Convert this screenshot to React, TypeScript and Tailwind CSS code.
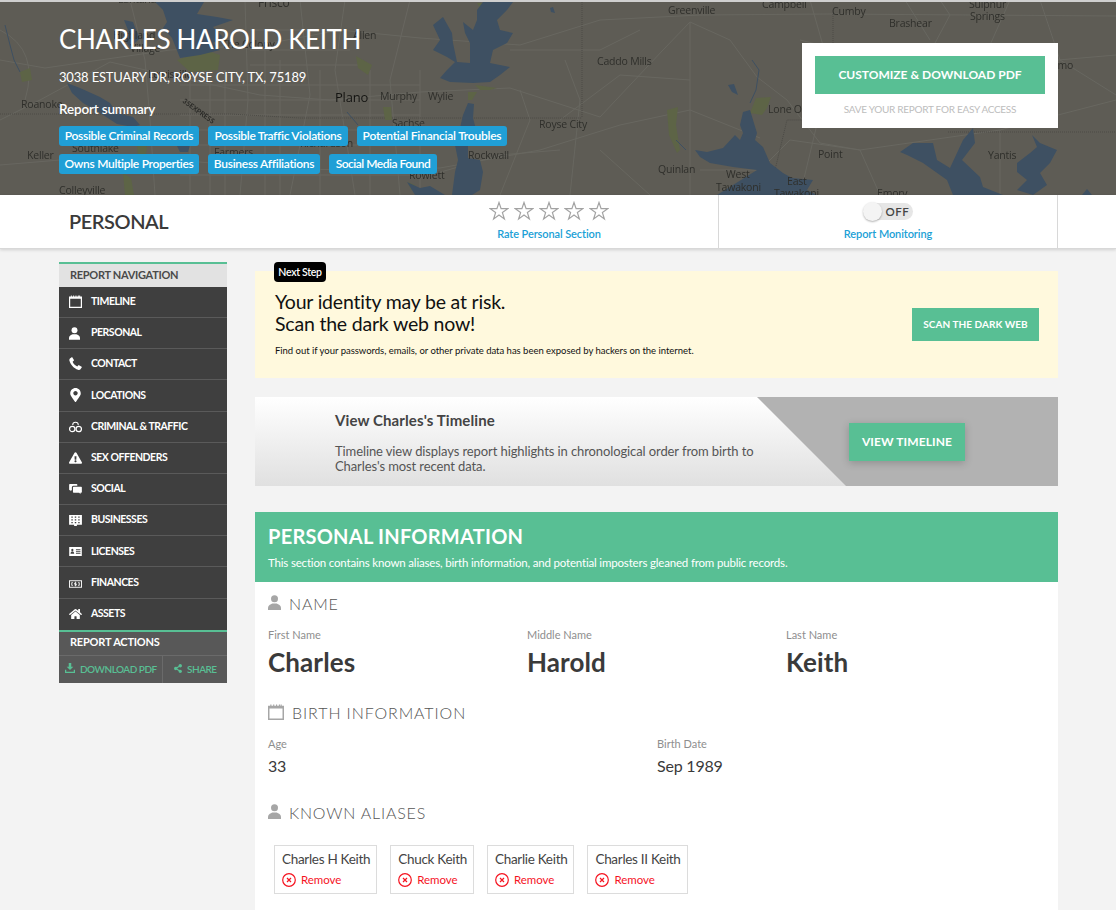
import React from "react";
import { FaMapMarkerAlt, FaExclamationTriangle, FaHome, FaShareAlt } from "react-icons/fa";

const labels: [string, number, number, number?][] = [
  ["Lantana", 118, 3], ["Frisco", 258, 7, 12], ["Greenville", 668, 14], ["Campbell", 762, 8], ["Cumby", 832, 15], ["Brashear", 889, 27],
  ["Sulphur", 969, 8], ["Springs", 970, 20], ["Caddo Mills", 597, 65], ["Lone Oak", 768, 113], ["Royse City", 539, 128],
  ["Murphy", 380, 100], ["Wylie", 428, 100], ["Sachse", 392, 127], ["Roanoke", 21, 108],
  ["Keller", 27, 159], ["Southlake", 72, 152], ["Farmers", 214, 156], ["Richardson", 300, 147], ["Rockwall", 468, 159], ["Rowlett", 409, 179],
  ["Colleyville", 59, 194], ["Quinlan", 658, 173], ["West", 726, 178], ["Tawakoni", 716, 191], ["East", 787, 185],
  ["Tawakoni", 774, 197], ["Point", 818, 158], ["Yantis", 988, 159], ["Emory", 877, 197], ["Allen", 353, 39],
  ["Highland", 113, 39], ["Village", 130, 52], ["The Colony", 222, 48], ["Lewisville", 148, 78], ["Como", 1045, 69],
];

const roads = [
  "M0 60 L45 68 L100 60 L170 50 L260 45 L340 30 L420 38 L520 45 L600 20 L700 15 L830 14 L1116 16",
  "M0 120 L40 100 L110 62 L190 80 L260 95 L330 100 L420 92 L510 88 L600 117",
  "M600 117 L663 50 L690 22 L730 40 L757 77 L787 100 L820 143 L860 150 L1000 130 L1116 100",
  "M0 165 L120 155 L290 170 L440 168 L540 150 L620 125 L690 110 L760 138",
  "M130 0 L145 60 L150 120 L155 195", "M245 0 L248 100 L240 195", "M300 0 L310 95 L290 195", "M345 0 L335 70 L355 195",
  "M410 0 L390 80 L400 195", "M520 90 L530 120 L500 195", "M690 22 L690 195", "M565 60 L580 100 L570 195",
  "M810 0 L830 70 L800 195", "M905 0 L930 40", "M1010 0 L990 45", "M1000 130 L1000 195",
  "M180 85 L420 85", "M180 100 L420 100", "M180 115 L420 115", "M180 130 L420 130", "M180 145 L420 145", "M180 175 L420 175",
  "M190 60 L190 195", "M210 70 L210 195", "M225 70 L225 195", "M265 30 L265 195", "M280 60 L280 195", "M320 70 L320 195", "M370 70 L370 195", "M420 70 L420 195",
  "M250 30 L340 30", "M250 50 L350 50", "M250 65 L360 65", "M560 120 L620 75 L690 80", "M420 178 L500 155 L560 150",
  "M0 30 Q40 50 25 100", "M1040 0 L1060 60 L1116 95", "M880 60 L800 40", "M600 150 L650 195", "M1058 60 L1116 55",
  "M700 170 L760 170 L790 140 L860 150 L880 195", "M940 0 L950 15 L935 43", "M510 50 L600 50 L640 30",
];

function MapBackground() {
  return (
    <svg className="absolute left-0 -top-[2px] w-[1116px] h-[195px] blur-[0.4px]" viewBox="0 0 1116 195" preserveAspectRatio="none">
      <rect width="1116" height="195" fill="#5e5c55" />
      <g stroke="#686760" strokeWidth="1" fill="none">
        {roads.map((d, i) => (<path key={i} d={d} />))}
      </g>
      <g stroke="#4c4b46" strokeWidth="1" strokeDasharray="1 1" fill="none">
        <path d="M0 114 L230 114 L300 118 L450 118 L582 118" />
        <path d="M582 0 L582 118" />
        <path d="M775 170 L787 120 L802 120" />
        <path d="M948 132 L1116 132" />
        <path d="M833 14 L833 43" />
      </g>
      <g fill="#5d6446">
        <path d="M20 72 L30 68 L32 80 L22 82 Z" />
        <path d="M177 60 L205 50 L220 55 L218 70 L190 72 Z" />
        <path d="M137 146 L147 145 L146 155 L138 155 Z" />
        <path d="M123 173 L131 178 L134 195 L125 195 Z" />
        <path d="M477 3 L490 3 L488 8 L480 8 Z" />
        <path d="M475 85 L497 88 L490 90 L480 90 Z" />
        <path d="M468 92 L477 92 L472 100 L468 100 Z" />
        <path d="M383 107 L391 107 L392 120 L385 120 Z" />
        <path d="M356 56 L372 65 L368 75 L358 68 Z" />
        <path d="M408 182 L415 185 L417 190 L411 190 Z" />
        <path d="M667 110 L678 107 L676 125 L680 150 L677 153 L669 135 Z" />
        <path d="M750 113 L756 98 L771 97 L767 108 L762 115 Z" />
      </g>
      <g fill="#3e5062">
        <path d="M155 2 L204 2 L197 14 L217 17 L233 20 L213 27 L223 37 L213 43 L220 50 L200 55 L180 58 L172 38 L163 28 L167 22 L163 10 Z" />
        <path d="M124 20 L133 22 L136 30 L140 38 L130 48 L124 38 L128 30 Z" />
        <path d="M67 83 L80 88 L100 97 L110 103 L117 113 L133 117 L140 125 L133 127 L117 124 L100 113 L83 103 L72 93 Z" />
        <path d="M177 146 L190 145 L188 152 L180 152 Z" />
        <path d="M443 17 L452 33 L453 43 L457 62 L470 63 L470 43 L465 33 L463 22 L473 30 L477 20 L477 10 L483 2 L513 2 L507 10 L497 20 L500 30 L513 33 L507 43 L493 50 L490 63 L510 67 L500 75 L490 82 L473 83 L450 82 L440 78 L447 70 L455 62 L447 57 L433 50 L440 40 L433 25 Z" />
        <path d="M468 103 L474 104 L473 118 L477 133 L468 143 L468 158 L480 160 L483 172 L480 190 L472 195 L452 195 L455 172 L458 160 L455 145 L460 128 L463 115 Z" />
        <path d="M407 182 L420 188 L430 186 L445 195 L415 195 Z" />
        <path d="M695 150 L707 152 L723 148 L735 135 L740 140 L743 133 L740 125 L743 112 L750 110 L757 133 L755 140 L763 147 L770 163 L783 173 L792 178 L813 180 L807 190 L817 195 L717 195 L757 170 L733 167 L710 163 L700 157 Z" />
        <path d="M728 85 L734 84 L738 95 L732 92 Z" />
        <path d="M900 152 L913 143 L933 143 L937 160 L950 168 L963 140 L973 128 L975 143 L962 160 L980 177 L983 187 L1003 195 L953 195 L947 180 L923 163 L907 155 Z" />
        <path d="M1017 163 L1030 153 L1037 147 L1032 135 L1040 143 L1057 150 L1050 163 L1040 173 L1047 185 L1033 195 L1017 190 L1027 180 L1017 172 Z" />
        <path d="M1082 195 L1087 189 L1092 195 Z" />
        <path d="M550 8 L553 7 L555 13 L551 12 Z" />
      </g>
      <g stroke="#3e5062" fill="none" strokeWidth="1">
        <path d="M752 60 L759 70 L756 90 L750 103" />
        <path d="M5 25 L10 45 L14 60 L20 72" />
        <path d="M676 140 L686 150" />
        <path d="M347 112 L358 125" />
      </g>
      <text x="182" y="102" fontSize="7" fill="#2a2a27" fontFamily="Lato, sans-serif" fontWeight="700" transform="rotate(36 182 102)">35EXPRESS</text>
      <g fontFamily="'Open Sans', Lato, sans-serif" fill="#2f2f2b" letterSpacing="-0.2">
        {labels.map(([t, x, y, s], i) => (
          <text key={i} x={x} y={y} fontSize={s ?? 10.5}>{t}</text>
        ))}
        <text x="335" y="102" fontSize="13" fill="#141412">Plano</text>
      </g>
    </svg>
  );
}

function CalendarIcon({ className = "" }: { className?: string }) {
  return (
    <svg viewBox="0 0 14 14" className={className} fill="currentColor">
      <path fillRule="evenodd" d="M0 1.500h2V0.500h1v1h1.500V.5h1v1H7V.5h1v1h1.500V.5h1v1H11V.5h1v1h2V14H0ZM1.300 4V12.700H12.700V4Z" />
    </svg>
  );
}
function Cuffs({ className = "" }: { className?: string }) {
  return (
    <svg viewBox="0 0 14 13" className={className} fill="none" stroke="currentColor" strokeWidth="1.300">
      <circle cx="3.500" cy="9.200" r="2.900" /><circle cx="10.500" cy="9.200" r="2.900" />
      <path d="M4 4.800A3 3 0 1 1 10 4.800" strokeWidth="1.100" />
    </svg>
  );
}
function GridIcon({ className = "" }: { className?: string }) {
  return (
    <svg viewBox="0 0 14 12" className={className} fill="currentColor">
      <path fillRule="evenodd" d="M0 0h14v10.500H8.500V12h-3v-1.500H0ZM2.500 1.500v1.500H4V1.500Zm3.700 0v1.500h1.600V1.500Zm3.800 0v1.500h1.500V1.500ZM2.500 4.500V6H4V4.500Zm3.700 0V6h1.600V4.500Zm3.800 0V6h1.500V4.500ZM2.500 7.500V9H4V7.500Zm3.700 0V9h1.600V7.500Zm3.800 0V9h1.500V7.500Z" />
    </svg>
  );
}
function LicenseIcon({ className = "" }: { className?: string }) {
  return (
    <svg viewBox="0 0 14 10" className={className} fill="currentColor">
      <path fillRule="evenodd" d="M0 0h14v10H0ZM3.500 2a1.300 1.300 0 1 0 .01 0ZM1.500 7.500h4c0-1.800-.8-2.400-2-2.400s-2 .6-2 2.400ZM7.500 2.500v1h5v-1Zm0 2.200v1h5v-1Zm0 2.200v1h5v-1Z" />
    </svg>
  );
}
function MoneyIcon({ className = "" }: { className?: string }) {
  return (
    <svg viewBox="0 0 14 8" className={className} fill="none" stroke="currentColor">
      <rect x=".5" y=".5" width="13" height="7" />
      <path d="M4 2.500H3v3h1M10 2.500h1v3h-1" />
      <path d="M7 1.500v5M8 3H6v1.200h2v1H6" strokeWidth=".8" />
    </svg>
  );
}
function DownloadIcon({ className = "" }: { className?: string }) {
  return (
    <svg viewBox="0 0 12 12" className={className} fill="currentColor">
      <path d="M4.500 0h3v4.500H10L6 8.500 2 4.500h2.500ZM0 8h1.500v2.500h9V8H12v4H0Z" />
    </svg>
  );
}
function PhoneIcon({ className = "" }: { className?: string }) {
  return (
    <svg viewBox="0 0 14 14" className={className} fill="currentColor">
      <path d="M1 1.500 3.300 0 5.500 3.600 3.900 5c.8 2 2.600 4 5 5.100l1.500-1.600L14 10.800l-1.600 2.400c-.6.700-1.700.9-2.700.5C5.300 12.200 1.800 8.500.5 4 .2 3 .4 2.100 1 1.500Z" />
    </svg>
  );
}
function SocialIcon({ className = "" }: { className?: string }) {
  return (
    <svg viewBox="0 0 14 11" className={className} fill="currentColor">
      <path d="M.8 0h7.400c.5 0 .8.3.8.8V2H4.800C3.800 2 3 2.800 3 3.800V6.500L1.500 8V6.800H.8C.3 6.800 0 6.500 0 6V.8C0 .3.300 0 .8 0Z" />
      <path d="M5 3h8.200c.5 0 .8.300.8.800V8.700c0 .5-.3.800-.8.800H12.500V11L11 9.500H5c-.5 0-.8-.3-.8-.8V3.800C4.200 3.300 4.500 3 5 3Z" />
    </svg>
  );
}
function Star() {
  return (
    <svg viewBox="0 0 20 20" className="w-[20px] h-[20px]" fill="none" stroke="#a3a3a3" strokeWidth="1.200">
      <path d="M10 1.500 12.100 7.700 18.800 7.700 13.400 11.600 15.400 18 10 14.100 4.600 18 6.600 11.600 1.200 7.700 7.900 7.700Z" />
    </svg>
  );
}
function PersonIcon({ className = "" }: { className?: string }) {
  return (
    <svg viewBox="0 0 13 15" className={className} fill="currentColor">
      <circle cx="6.500" cy="3.700" r="3.500" />
      <path d="M0 15v-2.500C0 10.500 2.500 9.300 4.300 8.500h4.400C10.500 9.300 13 10.500 13 12.500V15Z" />
    </svg>
  );
}

const nav: [string, React.ReactNode][] = [
  ["TIMELINE", <CalendarIcon className="w-[13px] h-[13px]" />],
  ["PERSONAL", <PersonIcon className="w-[11px] h-[13px]" />],
  ["CONTACT", <PhoneIcon className="w-[13px] h-[13px] -mt-[2px]" />],
  ["LOCATIONS", <FaMapMarkerAlt className="w-[11px] h-[14px] ml-[1px]" />],
  ["CRIMINAL & TRAFFIC", <Cuffs className="w-[13px] h-[13px]" />],
  ["SEX OFFENDERS", <FaExclamationTriangle className="w-[13px] h-[12px]" />],
  ["SOCIAL", <SocialIcon className="w-[13px] h-[10px]" />],
  ["BUSINESSES", <GridIcon className="w-[13px] h-[11px]" />],
  ["LICENSES", <LicenseIcon className="w-[13px] h-[9px]" />],
  ["FINANCES", <MoneyIcon className="w-[13px] h-[8px] mt-[3px]" />],
  ["ASSETS", <FaHome className="w-[13px] h-[12px]" />],
];

const row1: [string, string][] = [
  ["Possible Criminal Records", "w-[140px] tracking-[-0.28px]"],
  ["Possible Traffic Violations", "w-[140px] tracking-[-0.3px]"],
  ["Potential Financial Troubles", "w-[150px] tracking-[-0.22px]"],
];
const row2: [string, string][] = [
  ["Owns Multiple Properties", "w-[140px] tracking-[-0.3px]"],
  ["Business Affiliations", "w-[112px] tracking-[-0.28px]"],
  ["Social Media Found", "w-[108px] tracking-[-0.5px]"],
];
const aliases = ["Charles H Keith", "Chuck Keith", "Charlie Keith", "Charles II Keith"];

function Chip({ t, c }: { t: string; c: string }) {
  return <span className={`h-[20px] leading-[20px] text-center rounded-[3px] bg-[#209fd6] text-white text-[12px] font-semibold whitespace-nowrap ${c}`}>{t}</span>;
}

function SectionHead({ icon, text, tracking }: { icon: React.ReactNode; text: string; tracking: string }) {
  return (
    <div className="flex items-center gap-[8px] h-[22px]">
      {icon}
      <span className={`text-[16px] font-light ${tracking} text-[#555]`}>{text}</span>
    </div>
  );
}

function Field({ label, value, big }: { label: string; value: string; big?: boolean }) {
  return (
    <div>
      <div className="text-[11px] leading-[14px] text-[#8e8e8e]">{label}</div>
      {big ? (
        <div className="mt-[3px] text-[26px] leading-[34px] tracking-[0.1px] font-bold text-[#3a3a3a]">{value}</div>
      ) : (
        <div className="mt-[4px] text-[16px] leading-[22px] tracking-[-0.2px] text-[#3a3a3a]">{value}</div>
      )}
    </div>
  );
}

export default function App() {
  return (
    <div className="w-[1116px] h-[910px] overflow-hidden bg-[#f3f3f3] font-['Lato',sans-serif] text-[#3a3a3a]">
      <header className="relative h-[195px] border-t-2 border-[#cfcfcf] bg-[#5e5c55] overflow-hidden">
        <MapBackground />
        <div className="relative flex justify-between pl-[59px] pr-[58px]">
          <div>
            <h1 className="mt-[21px] text-[26px] leading-[32px] tracking-[-0.35px] text-white whitespace-nowrap">CHARLES HAROLD KEITH</h1>
            <p className="mt-[13px] text-[13px] leading-[18px] tracking-[-0.17px] text-white">3038 ESTUARY DR, ROYSE CITY, TX, 75189</p>
            <p className="mt-[14px] text-[13.500px] leading-[18px] tracking-[-0.17px] font-semibold text-white">Report summary</p>
            <div className="mt-[8px] flex gap-[9px]">{row1.map(([t, c]) => <Chip key={t} t={t} c={c} />)}</div>
            <div className="mt-[8px] flex gap-[9px]">{row2.map(([t, c]) => <Chip key={t} t={t} c={c} />)}</div>
          </div>
          <div className="mt-[41px] w-[256px] h-[85px] bg-white pt-[13px] px-[13px] text-center">
            <div className="w-[230px] h-[38px] bg-[#58bf94] text-white text-[12px] font-bold flex items-center justify-center">CUSTOMIZE &amp; DOWNLOAD PDF</div>
            <div className="mt-[9px] text-[10px] leading-[12px] tracking-[-0.28px] text-[#bdbdbd]">SAVE YOUR REPORT FOR EASY ACCESS</div>
          </div>
        </div>
      </header>

      <div className="h-[54px] bg-white flex border-b border-[#d8d8d8] shadow-[0_1px_3px_rgba(0,0,0,0.15)] relative">
        <div className="w-[380px] pl-[69px] pt-[14px] text-[20px] leading-[24px] font-semibold tracking-[-0.45px] text-[#3a3a3a]">PERSONAL</div>
        <div className="w-[339px] flex flex-col items-center pt-[6px] border-r border-[#d8d8d8] h-[53px]">
          <div className="flex gap-[5px]">{[0, 1, 2, 3, 4].map((i) => <Star key={i} />)}</div>
          <div className="mt-[6px] text-[11px] leading-[14px] font-semibold tracking-[-0.1px] text-[#209fd6]">Rate Personal Section</div>
        </div>
        <div className="w-[339px] flex flex-col items-center pt-[8px] border-r border-[#d8d8d8] h-[53px]">
          <div className="relative w-[49px] h-[17px] rounded-full bg-[#e6e6e6] text-[11.500px] font-semibold tracking-[0.5px] text-[#444] pl-[22px] leading-[17px]">
            OFF
            <span className="absolute -left-[1px] -top-[1px] w-[19px] h-[19px] rounded-full bg-[#f4f4f4] shadow-[0_1px_2px_rgba(0,0,0,0.3)]" />
          </div>
          <div className="mt-[7px] text-[11px] leading-[14px] font-semibold tracking-[-0.1px] text-[#209fd6]">Report Monitoring</div>
        </div>
      </div>

      <div className="flex items-start pl-[59px] gap-[28px] pt-[13px]">
        <aside className="w-[168px] shrink-0">
          <div className="h-[24.800px] border-t-2 border-[#58bf94] bg-[#e2e2e2] pl-[11px] text-[11px] leading-[21px] font-bold tracking-[-0.3px] text-[#4a4a4a]">REPORT NAVIGATION</div>
          <div className="bg-[#3f3f3f]">
            {nav.map(([t, icon]) => (
              <div key={t} className="h-[31.200px] flex items-center border-b border-[#5a5a5a] last:border-b-0 text-white">
                <span className="w-[32px] pl-[10px] flex justify-start">{icon}</span>
                <span className="text-[10.500px] font-bold tracking-[-0.48px] whitespace-nowrap">{t}</span>
              </div>
            ))}
          </div>
          <div className="bg-[#585858] border-t-2 border-[#58bf94]">
            <div className="h-[24px] pl-[11px] text-[11px] leading-[20px] font-bold tracking-[-0.2px] text-white border-b border-[#6a6a6a]">REPORT ACTIONS</div>
            <div className="h-[27px] flex text-[#58bf94] text-[10px] font-semibold tracking-[-0.5px]">
              <div className="w-[104px] flex items-center pl-[6px] gap-[5px] border-r border-[#6a6a6a]">
                <DownloadIcon className="w-[10px] h-[10px] -mt-[2px]" />
                <span className="whitespace-nowrap">DOWNLOAD PDF</span>
              </div>
              <div className="flex items-center pl-[11px] gap-[5px]">
                <FaShareAlt className="w-[8px] h-[9px] -mt-[2px]" />
                <span>SHARE</span>
              </div>
            </div>
          </div>
        </aside>

        <main className="w-[803px] shrink-0 relative">
          <span className="absolute left-[19px] top-0 h-[20px] w-[52px] rounded-[4px] bg-black text-white text-[10.500px] font-semibold leading-[20px] tracking-[-0.3px] text-center whitespace-nowrap">Next Step</span>
          <section className="mt-[9px] h-[107px] bg-[#fff9dd] flex items-center justify-between pl-[20px] pr-[19px]">
            <div className="text-[#111]">
              <div className="-mt-[1px] text-[19.500px] leading-[22px] tracking-[-0.2px]">Your identity may be at risk.<br />Scan the dark web now!</div>
              <div className="mt-[9px] text-[9.500px] leading-[13px] tracking-[-0.02px]">Find out if your passwords, emails, or other private data has been exposed by hackers on the internet.</div>
            </div>
            <div className="w-[127px] h-[33px] bg-[#58bf94] text-white text-[10px] font-bold tracking-[0.05px] flex items-center justify-center">SCAN THE DARK WEB</div>
          </section>

          <section className="relative mt-[19px] h-[89px] bg-gradient-to-b from-white to-[#e0e0e0] pl-[80px] overflow-hidden">
            <svg className="absolute right-0 top-0 w-[301px] h-[89px]" viewBox="0 0 301 89" fill="#b2b2b2"><path d="M0 0H301V89H89Z" /></svg>
            <div className="relative w-[440px]">
              <div className="pt-[13px] text-[15px] leading-[20px] tracking-[0.1px] font-bold text-[#444]">View Charles's Timeline</div>
              <div className="mt-[14px] text-[13px] leading-[15px] tracking-[-0.1px] text-[#555]">Timeline view displays report highlights in chronological order from birth to Charles's most recent data.</div>
            </div>
            <div className="absolute left-[594px] top-[26px] w-[116px] h-[38px] bg-[#58bf94] shadow-[0_2px_8px_rgba(0,0,0,0.2)] text-white text-[12px] font-bold tracking-[0.1px] flex items-center justify-center">VIEW TIMELINE</div>
          </section>

          <section className="mt-[26px] bg-white">
            <div className="h-[70px] bg-[#58bf94] pl-[13px] text-white">
              <div className="pt-[11px] text-[20px] leading-[26px] font-bold tracking-[0.25px]">PERSONAL INFORMATION</div>
              <div className="mt-[6px] text-[11.500px] leading-[16px] tracking-[-0.18px]">This section contains known aliases, birth information, and potential imposters gleaned from public records.</div>
            </div>
            <div className="pl-[13px] pb-[40px]">
              <div className="pt-[11px]">
                <SectionHead icon={<PersonIcon className="w-[13px] h-[15px] text-[#a6a6a6] -mt-[3px]" />} text="NAME" tracking="tracking-[0.8px]" />
              </div>
              <div className="mt-[13px] grid grid-cols-[259px_259px_1fr]">
                <Field big label="First Name" value="Charles" />
                <Field big label="Middle Name" value="Harold" />
                <Field big label="Last Name" value="Keith" />
              </div>
              <div className="mt-[23px]">
                <SectionHead icon={<CalendarIcon className="w-[16px] h-[16px] text-[#a6a6a6] -mt-[3px]" />} text="BIRTH INFORMATION" tracking="tracking-[0.9px]" />
              </div>
              <div className="mt-[13px] grid grid-cols-[389px_1fr]">
                <Field label="Age" value="33" />
                <Field label="Birth Date" value="Sep 1989" />
              </div>
              <div className="mt-[25px]">
                <SectionHead icon={<PersonIcon className="w-[13px] h-[15px] text-[#a6a6a6] -mt-[3px]" />} text="KNOWN ALIASES" tracking="tracking-[0.8px]" />
              </div>
              <div className="mt-[21px] ml-[6px] flex gap-[13px]">
                {aliases.map((a) => (
                  <div key={a} className="h-[49px] border border-[#dcdcdc] pl-[7px] pr-[6px] pt-[4px]">
                    <div className="text-[13.500px] leading-[18px] tracking-[-0.3px] text-[#444] whitespace-nowrap">{a}</div>
                    <div className="mt-[5px] flex items-center gap-[5px] text-[#f5131f] text-[11.500px] leading-[14px] tracking-[-0.05px]">
                      <svg viewBox="0 0 14 14" className="w-[14px] h-[14px]" fill="none" stroke="currentColor" strokeWidth="1.200">
                        <circle cx="7" cy="7" r="6.300" /><path d="M5 5l4 4M9 5l-4 4" />
                      </svg>
                      Remove
                    </div>
                  </div>
                ))}
              </div>
            </div>
          </section>
        </main>
      </div>
    </div>
  );
}
